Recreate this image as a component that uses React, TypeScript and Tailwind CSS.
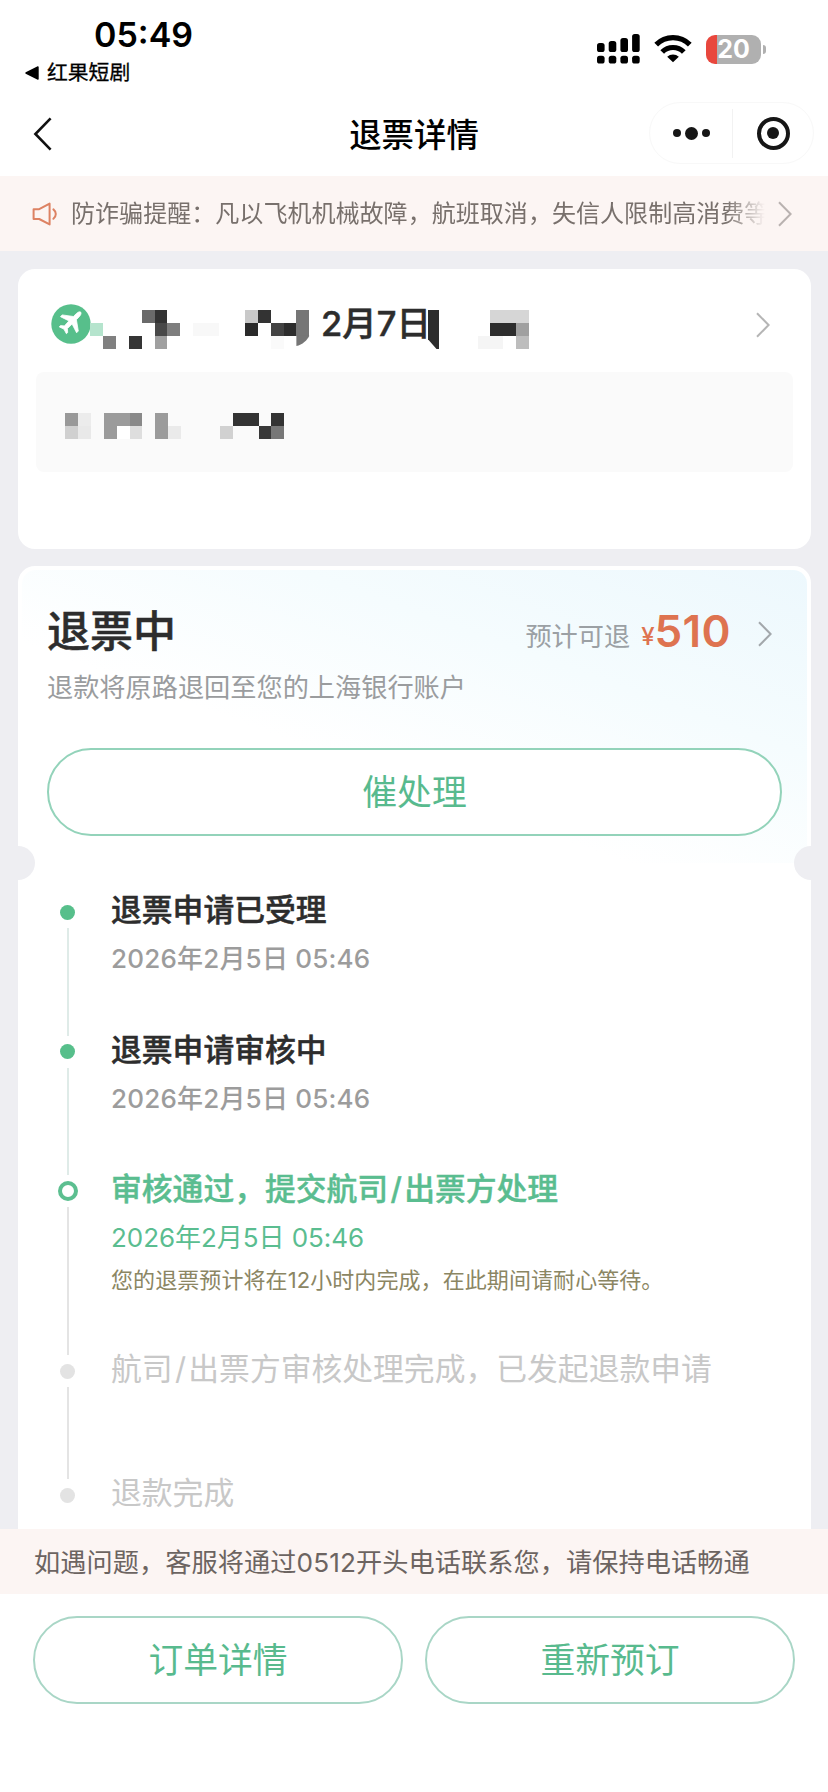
import { Fragment } from 'react';
import clsx from 'clsx';

type Cell = [col: number, row: number, fill: string, span?: number];

type Step = {
  title: string;
  time?: string;
  note?: string;
  state: 'done' | 'current' | 'pending';
  height: string;
};

const CELL = 12.9;

const routeCells: Cell[] = [
  [0, 1, '#b5e4cd'],
  [4, 0, '#6a6a6a'],
  [5, 0, '#333333'],
  [5, 1, '#484848'],
  [6, 1, '#7e7e7e'],
  [1, 2, '#808080'],
  [3, 2, '#353535'],
  [5, 2, '#a0a0a0'],
  [8, 1, '#f8f8f8', 2],
  [12, 0, '#c9c9c9'],
  [13, 0, '#333333'],
  [12, 1, '#2a2a2a'],
  [14, 1, '#434343'],
  [15, 1, '#2d2d2d'],
  [14, 2, '#fafafa'],
  [16, 0, '#767676'],
  [16, 1, '#767676'],
];

const timeCells: Cell[] = [
  [1, 0, '#d6d6d6', 3],
  [1, 1, '#2d2d2d', 2],
  [3, 1, '#a0a0a0'],
  [0, 2, '#f5f5f5', 2],
  [3, 2, '#bdbdbd'],
];

const passengerCells: Cell[] = [
  [0, 0, '#999999'],
  [1, 0, '#ececec'],
  [0, 1, '#d0d0d0'],
  [1, 1, '#e9e9e9'],
  [3, 0, '#9b9b9b', 2],
  [5, 0, '#898989'],
  [3, 1, '#9b9b9b'],
  [4, 1, '#ffffff'],
  [5, 1, '#dedede'],
  [7, 0, '#9b9b9b'],
  [7, 1, '#9b9b9b'],
  [8, 1, '#eaeaea'],
  [12, 1, '#d1d1d1'],
  [13, 0, '#333333', 2],
  [15, 1, '#383838'],
  [16, 0, '#333333'],
  [16, 1, '#777777'],
];

const steps: Step[] = [
  { title: '退票申请已受理', time: '2026年2月5日 05:46', state: 'done', height: 'h-[139.5px]' },
  { title: '退票申请审核中', time: '2026年2月5日 05:46', state: 'done', height: 'h-[139.5px]' },
  {
    title: '审核通过，提交航司/出票方处理',
    time: '2026年2月5日 05:46',
    note: '您的退票预计将在12小时内完成，在此期间请耐心等待。',
    state: 'current',
    height: 'h-[180px]',
  },
  { title: '航司/出票方审核处理完成，已发起退款申请', state: 'pending', height: 'h-[124px]' },
  { title: '退款完成', state: 'pending', height: 'h-[60px]' },
];

function Cells({ cells }: { cells: Cell[] }) {
  return (
    <g shapeRendering="crispEdges">
      {cells.map(([col, row, fill, span = 1]) => (
        <rect
          key={`${col}-${row}`}
          x={col * CELL}
          y={row * CELL}
          width={CELL * span}
          height={CELL}
          fill={fill}
        />
      ))}
    </g>
  );
}

function Chevron({ className }: { className?: string }) {
  return (
    <svg
      viewBox="0 0 14 26"
      className={clsx('h-[26px] w-[14px] shrink-0', className)}
      fill="none"
      stroke="currentColor"
      strokeWidth="2"
    >
      <path d="M1 1.2 12.6 13 1 24.8" />
    </svg>
  );
}

function StatusBar() {
  return (
    <div className="flex h-[96px] justify-between pl-[25px] pr-[62px]">
      <div className="flex flex-col">
        <div className="mt-[14px] pl-[69px] text-[34px] font-semibold leading-[42px]">05:49</div>
        <div className="mt-[2px] flex items-center text-[20.8px] leading-[29px] [-webkit-text-stroke:0.3px_#000]">
          <svg viewBox="0 0 14 14" className="mr-[8px] h-[14px] w-[14px]">
            <path d="M13 1v12L1 7z" fill="#000" stroke="#000" strokeWidth="1.4" strokeLinejoin="round" />
          </svg>
          红果短剧
        </div>
      </div>
      <div className="mt-[34px] flex h-[30px]">
        <svg viewBox="0 0 43 30" className="h-[30px] w-[43px]">
          <rect x="0" y="9" width="7.6" height="9" rx="2.6" />
          <rect x="11.7" y="7" width="7.6" height="11" rx="2.6" />
          <rect x="23.4" y="4" width="7.6" height="14" rx="2.6" />
          <rect x="35.1" y="0" width="7.6" height="18" rx="2.6" />
          <rect x="0" y="21.7" width="7.6" height="7.8" rx="2.6" />
          <rect x="11.7" y="21.7" width="7.6" height="7.8" rx="2.6" />
          <rect x="23.4" y="21.7" width="7.6" height="7.8" rx="2.6" />
          <rect x="35.1" y="21.7" width="7.6" height="7.8" rx="2.6" />
        </svg>
        <svg viewBox="0 0 38 30" className="ml-[14px] h-[30px] w-[38px]">
          <g fill="none" stroke="#000" strokeWidth="5.2">
            <path d="M2.2 10.6a23.6 23.6 0 0 1 33.6 0" />
            <path d="M8.2 18a15.200 15.200 0 0 1 21.600 0" />
          </g>
          <path d="M13.2 22.8a8.400 8.400 0 0 1 11.600 0L19 28.300z" />
        </svg>
        <div className="ml-[14px] flex items-center">
          <div className="flex h-[29px] w-[55px] items-center justify-center rounded-[9px] bg-[linear-gradient(90deg,#e8473d_11.5px,#b0b0b0_11.5px)] text-[25px] font-bold leading-none text-white">
            20
          </div>
          <div className="ml-[2px] h-[9px] w-[3px] rounded-r-full bg-[#b0b0b0]" />
        </div>
      </div>
    </div>
  );
}

function NavBar() {
  return (
    <div className="grid h-[80px] grid-cols-[180px_1fr_180px] pt-[6px]">
      <svg viewBox="0 0 20 34" className="ml-[33px] mt-[15px] h-[34px] w-[20px]" fill="none" stroke="#111" strokeWidth="2.6">
        <path d="M17.6 1.4 2.4 17l15.2 15.6" />
      </svg>
      <h1 className="pt-[3px] text-center text-[32.4px] font-medium leading-[62px] text-black">退票详情</h1>
      <div className="ml-[1px] flex h-[62px] w-[165px] items-center rounded-full border border-[#f8f8f8]">
        <div className="flex w-[83px] items-center justify-center gap-[4px] border-r border-[#f2f2f2] py-[18px]">
          <i className="h-2 w-2 rounded-full bg-[#161616]" />
          <i className="h-[13px] w-[13px] rounded-full bg-[#161616]" />
          <i className="h-2 w-2 rounded-full bg-[#161616]" />
        </div>
        <div className="flex flex-1 justify-center">
          <div className="flex h-[33px] w-[33px] items-center justify-center rounded-full border-4 border-[#161616]">
            <i className="h-[12px] w-[12px] rounded-full bg-[#161616]" />
          </div>
        </div>
      </div>
    </div>
  );
}

function FraudNotice() {
  return (
    <div className="flex h-[75px] items-center bg-[#fcf5f3] pl-[32px] pr-[36px]">
      <svg viewBox="0 0 26 24" className="h-[24px] w-[26px] shrink-0" fill="none" stroke="#dd8263" strokeWidth="2">
        <path d="M1.6 7.2h5.6L17.6 1.6v20.8L7.2 17H1.6z" strokeLinejoin="round" />
        <path d="M21.4 7.4c3.2 2.6 3.2 6.8 0 9.4" strokeLinecap="round" />
      </svg>
      <div className="ml-[13px] w-[699px] shrink-0 whitespace-nowrap text-[24.05px] leading-[36px] text-[#78706c] [mask-image:linear-gradient(90deg,#000_655px,transparent_694px)]">
        防诈骗提醒：凡以飞机机械故障，航班取消，失信人限制高消费等
      </div>
      <Chevron className="ml-auto text-[#b9b2b0]" />
    </div>
  );
}

function FlightCard() {
  return (
    <section className="h-[280px] rounded-[17px] bg-white px-[18px]">
      <div className="flex h-[103px] items-start pl-[15px] pr-[23px] pt-[35px]">
        <svg viewBox="0 0 40 40" className="h-[40px] w-[40px] shrink-0">
          <circle cx="20" cy="20" r="19.7" fill="#57bf8b" />
          <path
            d="M29.7 8.1c-1.200-.6-2.700-.1-4 1.200l-3.300 3.200-11.200-1.600-1.700 1.800 8.500 4.200-4.600 5-3.900-.3-1.200 1.300 4.600 2.200 2.500 4.600 1.300-1.200-.3-3.900 4.700-4.600 4.500 8.800 1.700-1.800-1.900-11.300 3.300-3.500c1.200-1.400 1.700-3 1-4.100z"
            fill="#fff"
            stroke="#fff"
            strokeWidth="0.8"
            strokeLinejoin="round"
          />
        </svg>
        <svg viewBox="0 0 220 39" className="-ml-px mt-[6px] h-[39px] w-[220px] shrink-0">
          <Cells cells={routeCells} />
          <path d="M206.4 25.7h12.9c-2 4.5-7 9-12.9 10.3z" fill="#767676" />
        </svg>
        <span className="ml-[11px] mt-[3px] w-[107px] shrink-0 whitespace-nowrap text-[34.5px] font-medium leading-[34px] text-[#2d2d2d] [-webkit-text-stroke:0.5px_#2d2d2d]">
          2月7日
        </span>
        <svg viewBox="0 0 102 39" className="mt-[6px] h-[39px] w-[102px] shrink-0">
          <path d="M-1 0h12v39H8.5L-1 28z" fill="#2d2d2d" />
          <g transform="translate(49.5 0)">
            <Cells cells={timeCells} />
          </g>
        </svg>
        <Chevron className="ml-auto mt-[8px] text-[#b5b5b5]" />
      </div>
      <div className="h-[100px] rounded-[8px] bg-[#fafafa] pl-[29px] pt-[41px]">
        <svg viewBox="0 0 220 26" className="h-[26px] w-[220px]">
          <Cells cells={passengerCells} />
        </svg>
      </div>
    </section>
  );
}

function Marker({ state }: { state: Step['state'] }) {
  return (
    <div className="flex h-[32px] items-center justify-center">
      <i
        className={clsx(
          'rounded-full',
          state === 'done' && 'h-[15px] w-[15px] bg-[#57bf8b]',
          state === 'current' && 'h-[20px] w-[20px] border-4 border-[#5cbf90]',
          state === 'pending' && 'h-[15px] w-[15px] bg-[#e3e3e3]'
        )}
      />
    </div>
  );
}

// the slash gets a little air between the two names
function StepTitle({ text }: { text: string }) {
  return text.split('/').map((part, i) => (
    <Fragment key={part}>
      {i > 0 && <span className="px-[2.3px]">/</span>}
      {part}
    </Fragment>
  ));
}

function Timeline() {
  return (
    <ul className="pl-[32px] pt-[16px]">
      {steps.map((step, i) => (
        <li key={step.title} className={clsx('flex', step.height)}>
          <div className="flex w-[35px] flex-col">
            <Marker state={step.state} />
            {i < steps.length - 1 && (
              <div
                className={clsx(
                  'mx-auto w-[2px] flex-1',
                  step.state === 'done' ? 'bg-[#dfebe8]' : 'bg-[#e4e4e4]'
                )}
              />
            )}
          </div>
          <div className="ml-[26px] whitespace-nowrap">
            <div
              className={clsx(
                '-mt-[9px] text-[30.8px] leading-[46px]',
                step.state === 'done' && 'font-medium text-[#2d2d2d] [-webkit-text-stroke:0.5px_#2d2d2d]',
                step.state === 'current' && 'font-medium text-[#5abd90] [-webkit-text-stroke:0.4px_#5abd90]',
                step.state === 'pending' && 'text-[#c8c8c8]'
              )}
            >
              <StepTitle text={step.title} />
            </div>
            {step.time && (
              <div
                className={clsx(
                  'mt-[6px] text-[26px] leading-[40px]',
                  step.state === 'current'
                    ? 'tracking-[-0.05px] text-[#5abd90]'
                    : 'font-medium tracking-[0.2px] text-[#9c9c9c]'
                )}
              >
                {step.time}
              </div>
            )}
            {step.note && (
              <div className="mt-[5px] text-[22px] leading-[34px] tracking-[0.08px] text-[#8b8663]">
                {step.note}
              </div>
            )}
          </div>
        </li>
      ))}
    </ul>
  );
}

function RefundCard() {
  return (
    <section className="relative mt-[17px] h-[964px] overflow-hidden rounded-t-[17px] bg-white">
      <div className="h-[297px] p-[4px] pb-0">
        <div className="h-[293px] rounded-t-[14px] bg-[linear-gradient(200deg,#edf8fd_0%,#f5fcfe_32%,#ffffff_62%)] pl-[25px] pr-[26px] pt-[29px]">
          <div className="flex h-[66px] items-center">
            <h2 className="-mt-[2px] text-[43px] font-medium leading-[60px] text-[#2d2d2d] [-webkit-text-stroke:0.5px_#2d2d2d]">
              退票中
            </h2>
            <span className="ml-auto mt-[10px] text-[26.2px] text-[#9ba0a4]">预计可退</span>
            <span className="ml-[11px] mt-[9px] text-[24px] font-medium text-[#de7350]">¥</span>
            <span className="text-[44px] -mt-[3px] font-semibold text-[#de7350] tracking-[0.4px]">510</span>
            <Chevron className="ml-[27px] mr-[9px] mt-[4px] text-[#a3a8ac]" />
          </div>
          <p className="mt-[3px] text-[26.2px] leading-[40px] text-[#9a9c9e]">退款将原路退回至您的上海银行账户</p>
          <button className="mt-[40px] block h-[88px] w-[735px] rounded-full border-2 border-[#93d3ba] bg-white text-[34.8px] leading-[84px] text-[#58ba8e]">
            催处理
          </button>
        </div>
      </div>
      <div className="absolute -left-[17px] top-[280px] h-[34px] w-[34px] rounded-full bg-[#eeeef2]" />
      <div className="absolute -right-[17px] top-[280px] h-[34px] w-[34px] rounded-full bg-[#eeeef2]" />
      <div className="pt-[17px]">
        <Timeline />
      </div>
    </section>
  );
}

export default function App() {
  return (
    <div
      lang="zh-CN"
      className="flex h-[1792px] w-[828px] flex-col overflow-hidden bg-white font-[family-name:Inter,'Noto_Sans_CJK_SC',sans-serif] text-black"
    >
      <StatusBar />
      <NavBar />
      <FraudNotice />
      <main className="h-[1278px] overflow-hidden bg-[#eeeef2] pl-[18px] pr-[17px] pt-[18px]">
        <FlightCard />
        <RefundCard />
      </main>
      <div className="h-[65px] bg-[#fcf5f3] pl-[34px] text-[26.2px] leading-[67px] tracking-[0.07px] text-[#6c6461]">
        如遇问题，客服将通过0512开头电话联系您，请保持电话畅通
      </div>
      <footer className="flex gap-[22px] pl-[33px] pr-[33px] pt-[22px]">
        {['订单详情', '重新预订'].map((label) => (
          <button
            key={label}
            className="h-[88px] flex-1 rounded-full border-2 border-[#a9d6c6] text-[34.8px] leading-[84px] text-[#58ba8e]"
          >
            {label}
          </button>
        ))}
      </footer>
    </div>
  );
}
